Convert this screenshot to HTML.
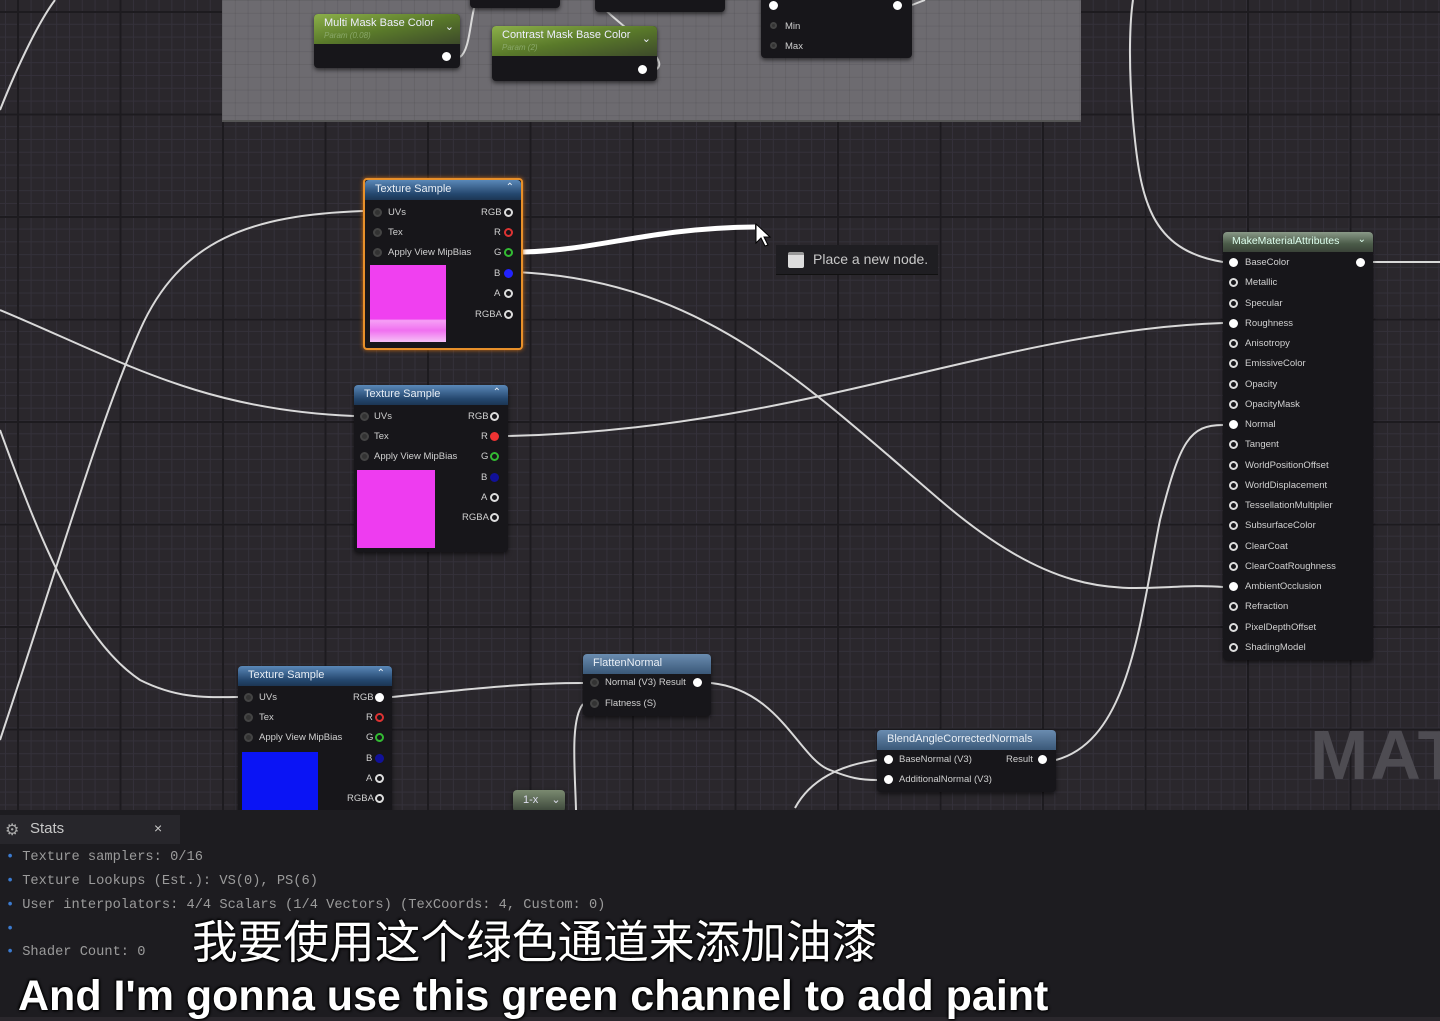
<!DOCTYPE html>
<html><head><meta charset="utf-8"><style>
*{margin:0;padding:0;box-sizing:border-box}
body{width:1440px;height:1017px;overflow:hidden;position:relative;background:#2a272c;font-family:"Liberation Sans",sans-serif}
#graph{position:absolute;left:0;top:0;width:1440px;height:810px;
background-color:#2a272c;
background-image:
linear-gradient(to right,#1d1b1f 0 2px,transparent 2px),
linear-gradient(to bottom,#1d1b1f 0 2px,transparent 2px),
linear-gradient(to right,#34313a 0 1px,transparent 1px),
linear-gradient(to bottom,#34313a 0 1px,transparent 1px);
background-size:102.5px 102.5px,102.5px 102.5px,12.8px 12.8px,12.8px 12.8px;
background-position:17px 0,0 11px,5px 0,0 11px}
.comment{position:absolute;left:222px;top:0;width:859px;height:122px;background:#6d6b70;background-image:linear-gradient(to right,rgba(0,0,0,.07) 1px,transparent 1px),linear-gradient(to bottom,rgba(0,0,0,.07) 1px,transparent 1px);background-size:12.8px 12.8px;border-bottom:2px solid #555;}
.node{position:absolute;background:#17161a;border-radius:4px;box-shadow:0 2px 4px rgba(0,0,0,.6);color:#d8d8d8;font-size:10px}
.hdr{height:20px;border-radius:4px 4px 0 0;background:linear-gradient(to bottom,#5a88b8,#24476e 70%,#1c3554);color:#e8eef5;font-size:11px;padding:3px 0 0 10px;position:relative}
.hdr .ch{position:absolute;right:7px;top:2px;font-size:10px}
.row{position:absolute;font-size:9.5px;color:#d0d0d0;white-space:nowrap}
.pin{position:absolute;width:9px;height:9px;border-radius:50%;border:2px solid #ddd}
.pf{background:#fff;border-color:#fff}
.pd{border-color:#444;background:#333}
.prev{position:absolute;background:#ee3cf0}
.green{background:linear-gradient(to bottom right,#8cb04a,#5a7a2a 50%,#3d4a2a);height:30px;border-radius:4px 4px 0 0;padding:3px 0 0 10px;color:#eef;font-size:11px;position:relative}
.green small{display:block;color:#8aa86a;font-size:8px;font-style:italic;margin-top:2px}
#panel{position:absolute;left:0;top:810px;width:1440px;height:207px;background:#1d1c20}
.tab{position:absolute;left:0;top:5px;width:180px;height:29px;background:#27262b;color:#c8c8c8;font-size:15px;padding:5px 0 0 30px}
.st{position:absolute;left:6px;font-family:"Liberation Mono",monospace;font-size:13.7px;color:#9b9b9b;white-space:pre}
.st b{color:#3b7bd0;font-weight:normal;margin-right:8px}
.sub{position:absolute;color:#fff;white-space:nowrap;text-shadow:0 0 3px #000,1px 1px 2px #000,-1px -1px 2px #000}
</style></head><body>
<div id="graph"></div>
<div class="comment"></div>
<svg width="1440" height="810" style="position:absolute;left:0;top:0">
<g fill="none" stroke="#d9d9d9" stroke-width="2">
<path d="M0 110 C20 60 40 20 55 0"/>
<path d="M363 211 C250 215 180 240 140 330 C100 420 60 560 0 740"/>
<path d="M0 310 C120 360 200 410 354 416"/>
<path d="M0 430 C40 540 80 640 140 680 C180 700 210 697 238 697"/>
<path d="M508 436 C800 430 1000 330 1223 323"/>
<path d="M515 272 C700 280 800 380 940 500 C1080 620 1140 580 1223 587"/>
<path d="M392 697 C460 690 520 683 583 683"/>
<path d="M711 683 C780 690 800 760 830 770 C850 778 860 780 877 780"/>
<path d="M583 704 C570 720 575 770 576 810"/>
<path d="M795 808 C810 780 840 765 877 760"/>
<path d="M1056 760 C1130 740 1140 620 1160 520 C1180 440 1190 425 1223 425"/>
<path d="M1223 262 C1150 250 1140 200 1133 120 C1128 60 1130 20 1133 0"/>
<path d="M1373 262 L1440 262"/>
<path d="M460 57 C470 50 470 20 475 5"/>
<path d="M655 70 C665 65 655 55 650 50 C620 20 600 10 600 0"/>
<path d="M912 5 L925 0"/>
</g>
<path d="M523 252 C600 250 650 228 755 227" fill="none" stroke="#fff" stroke-width="5"/>
<path d="M756 224 L756 243 L761 238 L765 246 L768 245 L764 237 L770 237 Z" fill="#fff" stroke="#000" stroke-width="1"/>
</svg>

<div class="node" style="left:470px;top:-8px;width:90px;height:16px"></div>
<div class="node" style="left:595px;top:-8px;width:130px;height:20px"><div class="row" style="left:20px;top:-3px;color:#bbb">Contrast (S)</div></div>
<div class="node" style="left:761px;top:-4px;width:151px;height:62px">
<div class="pin pf" style="left:8px;top:5px"></div><div class="pin pf" style="left:132px;top:5px"></div>
<div class="pin pd" style="left:9px;top:26px;width:7px;height:7px"></div><div class="row" style="left:24px;top:25px">Min</div>
<div class="pin pd" style="left:9px;top:46px;width:7px;height:7px"></div><div class="row" style="left:24px;top:45px">Max</div></div>
<div class="node" style="left:314px;top:14px;width:146px;height:54px"><div class="green">Multi Mask Base Color<small>Param (0.08)</small><span style="position:absolute;right:6px;top:6px">⌄</span></div><div class="pin pf" style="left:128px;top:38px"></div></div>
<div class="node" style="left:492px;top:26px;width:165px;height:55px"><div class="green">Contrast Mask Base Color<small>Param (2)</small><span style="position:absolute;right:6px;top:6px">⌄</span></div><div class="pin pf" style="left:146px;top:39px"></div></div>

<div class="node" style="left:363px;top:178px;width:160px;height:172px;border:2px solid #e8902a;box-shadow:0 0 4px #c86a10">
<div class="hdr">Texture Sample<span class="ch">⌃</span></div>
<div class="pin pd" style="left:8px;top:28px"></div><div class="row" style="left:23px;top:27px">UVs</div>
<div class="pin pd" style="left:8px;top:48px"></div><div class="row" style="left:23px;top:47px">Tex</div>
<div class="pin pd" style="left:8px;top:68px"></div><div class="row" style="left:23px;top:67px">Apply View MipBias</div>
<div class="row" style="left:116px;top:27px">RGB</div><div class="pin" style="left:139px;top:28px"></div>
<div class="row" style="left:129px;top:47px">R</div><div class="pin" style="left:139px;top:48px;border-color:#d33"></div>
<div class="row" style="left:129px;top:67px">G</div><div class="pin" style="left:139px;top:68px;border-color:#3b3"></div>
<div class="row" style="left:129px;top:88px">B</div><div class="pin" style="left:139px;top:89px;border-color:#22f;background:#22f"></div>
<div class="row" style="left:129px;top:108px">A</div><div class="pin" style="left:139px;top:109px"></div>
<div class="row" style="left:110px;top:129px">RGBA</div><div class="pin" style="left:139px;top:130px"></div>
<div class="prev" style="left:5px;top:85px;width:76px;height:77px;background:linear-gradient(#f040f0 70%,#f6a0f6 72%,#f070f0 85%,#f6c0f6)"></div>
</div>
<div class="node" style="left:354px;top:385px;width:154px;height:167px">
<div class="hdr">Texture Sample<span class="ch">⌃</span></div>
<div class="pin pd" style="left:6px;top:27px"></div><div class="row" style="left:20px;top:26px">UVs</div>
<div class="pin pd" style="left:6px;top:47px"></div><div class="row" style="left:20px;top:46px">Tex</div>
<div class="pin pd" style="left:6px;top:67px"></div><div class="row" style="left:20px;top:66px">Apply View MipBias</div>
<div class="row" style="left:114px;top:26px">RGB</div><div class="pin" style="left:136px;top:27px"></div>
<div class="row" style="left:127px;top:46px">R</div><div class="pin pf" style="left:136px;top:47px;background:#e33;border-color:#e33"></div>
<div class="row" style="left:127px;top:66px">G</div><div class="pin" style="left:136px;top:67px;border-color:#3b3"></div>
<div class="row" style="left:127px;top:87px">B</div><div class="pin" style="left:136px;top:88px;border-color:#119;background:#119"></div>
<div class="row" style="left:127px;top:107px">A</div><div class="pin" style="left:136px;top:108px"></div>
<div class="row" style="left:108px;top:127px">RGBA</div><div class="pin" style="left:136px;top:128px"></div>
<div class="prev" style="left:3px;top:85px;width:78px;height:78px"></div>
</div>
<div class="node" style="left:238px;top:666px;width:154px;height:150px">
<div class="hdr">Texture Sample<span class="ch">⌃</span></div>
<div class="pin pd" style="left:6px;top:27px"></div><div class="row" style="left:21px;top:26px">UVs</div>
<div class="pin pd" style="left:6px;top:47px"></div><div class="row" style="left:21px;top:46px">Tex</div>
<div class="pin pd" style="left:6px;top:67px"></div><div class="row" style="left:21px;top:66px">Apply View MipBias</div>
<div class="row" style="left:115px;top:26px">RGB</div><div class="pin pf" style="left:137px;top:27px"></div>
<div class="row" style="left:128px;top:46px">R</div><div class="pin" style="left:137px;top:47px;border-color:#d33"></div>
<div class="row" style="left:128px;top:66px">G</div><div class="pin" style="left:137px;top:67px;border-color:#3b3"></div>
<div class="row" style="left:128px;top:87px">B</div><div class="pin" style="left:137px;top:88px;border-color:#119;background:#119"></div>
<div class="row" style="left:128px;top:107px">A</div><div class="pin" style="left:137px;top:108px"></div>
<div class="row" style="left:109px;top:127px">RGBA</div><div class="pin" style="left:137px;top:128px"></div>
<div class="prev" style="left:4px;top:86px;width:76px;height:60px;background:#0a14f5"></div>
</div>
<div class="node" style="left:583px;top:654px;width:128px;height:62px">
<div class="hdr" style="background:linear-gradient(#6a8cb0,#3a5878)">FlattenNormal</div>
<div class="pin pd" style="left:7px;top:24px"></div><div class="row" style="left:22px;top:23px">Normal (V3) Result</div><div class="pin pf" style="left:110px;top:24px"></div>
<div class="pin pd" style="left:7px;top:45px"></div><div class="row" style="left:22px;top:44px">Flatness (S)</div>
</div>
<div class="node" style="left:877px;top:730px;width:179px;height:62px">
<div class="hdr" style="background:linear-gradient(#6a8cb0,#3a5878)">BlendAngleCorrectedNormals</div>
<div class="pin pf" style="left:7px;top:25px"></div><div class="row" style="left:22px;top:24px">BaseNormal (V3)</div>
<div class="row" style="left:129px;top:24px">Result</div><div class="pin pf" style="left:161px;top:25px"></div>
<div class="pin pf" style="left:7px;top:45px"></div><div class="row" style="left:22px;top:44px">AdditionalNormal (V3)</div>
</div>
<div class="node" style="left:513px;top:790px;width:52px;height:22px;background:linear-gradient(#7a8a70,#3a4438);color:#dde;font-size:11px;padding:3px 0 0 10px">1-x <span style="margin-left:10px">⌄</span></div>
<div style="position:absolute;left:776px;top:245px;width:162px;height:30px;background:#1f1e22;color:#c8c8c8;font-size:14px;padding:6px 0 0 37px;border-bottom:1px solid #111">Place a new node.</div>
<div style="position:absolute;left:788px;top:252px;width:16px;height:16px;background:#ddd;border-top:3px solid #999;border-radius:2px"></div>
<div class="node" style="left:1223px;top:232px;width:150px;height:428px">
<div class="hdr" style="background:linear-gradient(#8a9a88,#4a5a48 60%,#3a4238);color:#dfe;font-size:10.5px;padding-left:9px">MakeMaterialAttributes<span class="ch">⌄</span></div>
<div class="pin pf" style="left:133px;top:26px"></div>
<div id="mma"></div>
</div>
<div style="position:absolute;left:1310px;top:715px;font-size:70px;font-weight:bold;color:#4e4c52;letter-spacing:2px">MAT</div>

<div id="panel">
<div class="tab"><span style="position:absolute;left:5px;top:5px;font-size:16px;color:#aaa">⚙</span>Stats<span style="position:absolute;left:154px;top:5px;font-size:14px">×</span></div>
<div class="st" style="top:40px"><b>•</b>Texture samplers: 0/16</div>
<div class="st" style="top:64px"><b>•</b>Texture Lookups (Est.): VS(0), PS(6)</div>
<div class="st" style="top:88px"><b>•</b>User interpolators: 4/4 Scalars (1/4 Vectors) (TexCoords: 4, Custom: 0)</div>
<div class="st" style="top:112px"><b>•</b></div>
<div class="st" style="top:135px"><b>•</b>Shader Count: 0</div>
</div>
<div class="sub" style="left:192px;top:906px;font-size:45.7px;font-family:'Liberation Sans','Noto Sans CJK SC',sans-serif">我要使用这个绿色通道来添加油漆</div>
<div class="sub" style="left:18px;top:972px;font-size:43px;font-weight:bold;font-family:'Liberation Sans','DejaVu Sans',sans-serif">And I'm gonna use this green channel to add paint</div>
<script>
var n=["BaseColor","Metallic","Specular","Roughness","Anisotropy","EmissiveColor","Opacity","OpacityMask","Normal","Tangent","WorldPositionOffset","WorldDisplacement","TessellationMultiplier","SubsurfaceColor","ClearCoat","ClearCoatRoughness","AmbientOcclusion","Refraction","PixelDepthOffset","ShadingModel"];
var f=[0,3,8,16],h="";
for(var i=0;i<n.length;i++){var y=26+i*20.25;h+='<div class="pin'+(f.indexOf(i)>=0?' pf':'')+'" style="left:6px;top:'+y+'px"></div><div class="row" style="left:22px;top:'+(y-1)+'px">'+n[i]+'</div>';}
document.getElementById("mma").outerHTML=h;
</script>
</body></html>
